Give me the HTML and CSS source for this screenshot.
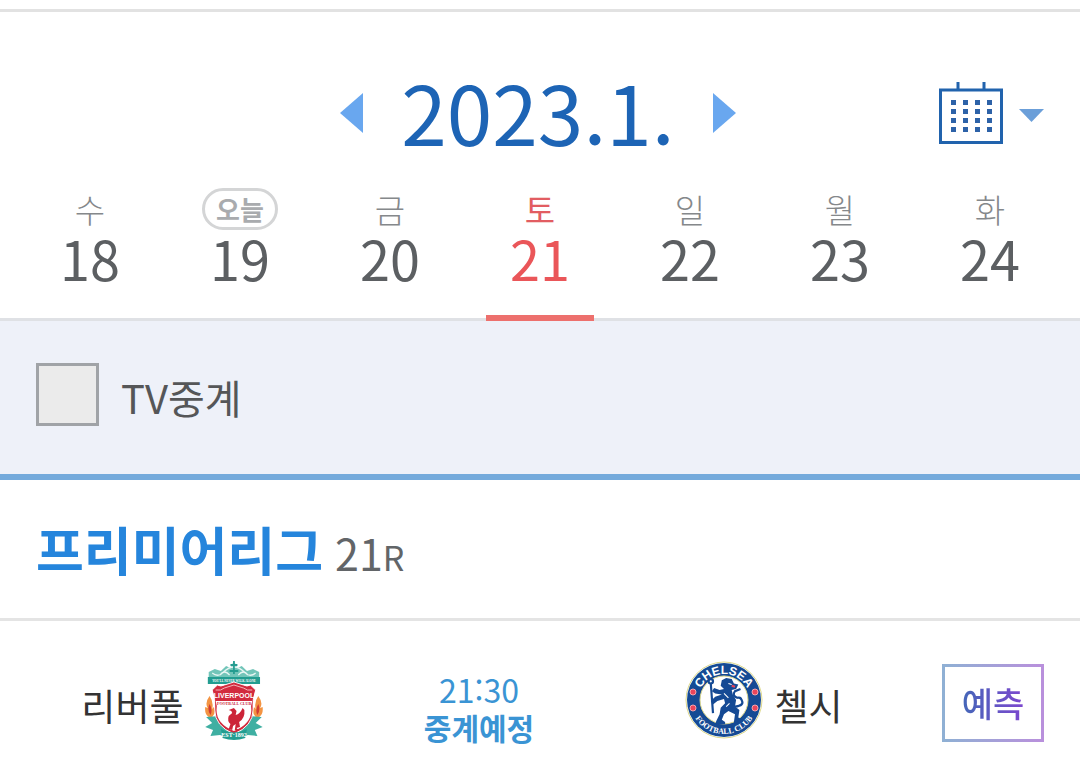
FILE: index.html
```
<!DOCTYPE html>
<html lang="ko">
<head>
  <meta charset="UTF-8">
  <meta name="viewport" content="width=device-width, initial-scale=1.0">
  <title>경기 일정</title>
  <link rel="stylesheet" href="styles.css">
</head>
<body>

  <header class="schedule-header">
    <div class="month-nav">
      <button type="button" class="nav-button" aria-label="이전 달">
        <svg width="23" height="40" viewBox="0 0 23 40"><path d="M23 0v40L0 20z" fill="#69a7ef"/></svg>
      </button>
      <h1 class="current-month">2023.1.</h1>
      <button type="button" class="nav-button" aria-label="다음 달">
        <svg width="23" height="40" viewBox="0 0 23 40"><path d="M0 0v40l23-20z" fill="#69a7ef"/></svg>
      </button>
    </div>
    <button type="button" class="calendar-button" aria-label="달력 열기">
      <svg width="106" height="62" viewBox="0 0 106 62">
        <path d="M2.500 8h61v52.500h-61zM20 0v8M46 0v8" fill="none" stroke="#2163ad" stroke-width="3"/>
        <path d="M13 20.500h42M13 29.500h42M13 38.500h42M13 47.500h42" stroke="#2d62a8" stroke-width="5" stroke-dasharray="5 7"/>
        <path d="M81 27h25L93.500 40z" fill="#6b9fd9"/>
      </svg>
    </button>
  </header>

  <!-- 날짜 선택 -->
  <nav class="days">
    <a href="#" class="day"><span class="day-name">수</span><span class="day-number">18</span></a>
    <a href="#" class="day"><span class="day-name"><span class="today">오늘</span></span><span class="day-number">19</span></a>
    <a href="#" class="day"><span class="day-name">금</span><span class="day-number">20</span></a>
    <a href="#" class="day selected" aria-current="date"><span class="day-name">토</span><span class="day-number">21</span></a>
    <a href="#" class="day"><span class="day-name">일</span><span class="day-number">22</span></a>
    <a href="#" class="day"><span class="day-name">월</span><span class="day-number">23</span></a>
    <a href="#" class="day"><span class="day-name">화</span><span class="day-number">24</span></a>
  </nav>

  <div class="filter">
    <input type="checkbox" id="tv" class="filter-check">
    <label class="filter-label" for="tv">TV중계</label>
  </div>

  <main>
    <h2 class="league">프리미어리그<span class="round"> 21<small>R</small></span></h2>

    <div class="match">
      <div class="team home">
        <span class="team-name">리버풀</span>
        <svg class="crest" viewBox="0 0 78 80" role="img" aria-label="리버풀">
          <g transform="translate(5 0) scale(.87 1)">
            <!-- 상단 장식 -->
            <path d="M10 18v-6l7-3 7 2 6-5 5 2 4-7 4 7 5-2 6 5 7-2 7 3v6z" fill="#72c5b9"/>
            <path d="M14 13q7 5 13-1 6-5 12-5t12 5q6 6 13 1M23 15q5-6 11 0M55 15q-5-6-11 0" fill="none" stroke="#e8f6f3" stroke-width="1.500"/>
            <path d="M39 1v13M35 5h8M34 11h10" stroke="#249c90" stroke-width="2"/>
            <path d="M9 17h60v7H9z" fill="#239d91"/>
            <!-- 불꽃 -->
            <path d="M11 36q-6 7-2 12l-3-1q-1 7 4 10h4q5-5 2-10l-2 2q2-7-3-13zM67 36q6 7 2 12l3-1q1 7-4 10h-4q-5-5-2-10l2 2q-2-7 3-13z" fill="#f39443"/>
            <path d="M11 44q-3 6 1 11 3-5-1-11zM67 44q3 6-1 11-3-5 1-11z" fill="#d33b32"/>
            <path d="M7 57l16-1 4 8 9 7v8l-13-4-11 1 3-6-9-3 8-4zM71 57l-16-1-4 8-9 7v8l13-4 11 1-3-6 9-3-8-4z" fill="#3fafa2"/>
            <!-- 방패 -->
            <path d="M14 30l6-5q4 2 8 0l11-3 11 3q4 2 8 0l6 5q-4 9-3 20 0 16-22 24-22-8-22-24 1-11-3-20z" fill="#d22b3e" stroke="#fff"/>
            <path d="M18 41h42q-2 5-1 9 0 14-20 21-20-7-20-21 1-4-1-9z" fill="#fff"/>
            <path d="M18 30q6 1 10-2l11-3 11 3q4 3 10 2" fill="none" stroke="#f6bcc0"/>
            <path d="M33 50l6-2 3 3-1 4q5-1 8-7l2 2q1 8-6 12l1 5-4 1 3 3-5-1 1-6-3 2-1 4-4-1 2-5q-4-3-2-8l4-3-1-2z" fill="#cc2438"/>
            <path d="M24 69q15 7 30 0l-2 9q-13 4-26 0z" fill="#239d91"/>
          </g>
          <text class="crest-motto" x="39" y="22" text-anchor="middle">YOU'LL NEVER WALK ALONE</text>
          <text class="crest-name" x="39" y="38" text-anchor="middle">LIVERPOOL</text>
          <text class="crest-club" x="39" y="45" text-anchor="middle">FOOTBALL CLUB</text>
          <text class="crest-est" x="39" y="77" text-anchor="middle">EST·1892</text>
        </svg>
      </div>

      <div class="match-time">
        <time class="kickoff" datetime="2023-01-21T21:30">21:30</time>
        <span class="broadcast">중계예정</span>
      </div>

      <div class="team away">
        <svg class="crest" viewBox="0 0 78 80" role="img" aria-label="첼시">
          <circle cx="39" cy="40" r="38" fill="#fff" stroke="#ded98c" stroke-width="1"/>
          <circle cx="39" cy="40" r="37" fill="#154a94"/>
          <circle cx="39" cy="40" r="24" fill="#fff" stroke="#ded98c" stroke-width="1"/>
          <path id="arc-top" d="M13 40a26 26 0 0 1 52 0" fill="none"/>
          <path id="arc-bottom" d="M5 40a34 34 0 0 0 68 0" fill="none"/>
          <text class="ring-name" text-anchor="middle"><textPath href="#arc-top" startOffset="50%">CHELSEA</textPath></text>
          <text class="ring-club" text-anchor="middle"><textPath href="#arc-bottom" startOffset="50%">FOOTBALL CLUB</textPath></text>
          <g fill="#e8455b" stroke="#f4a4ad">
            <circle cx="8" cy="32" r="3"/><circle cx="70" cy="32" r="3"/>
            <circle cx="8" cy="48" r="3"/><circle cx="70" cy="48" r="3"/>
          </g>
          <!-- 사자 -->
          <g transform="translate(-5 -4) scale(1.1)">
            <g fill="#154a94">
              <path d="M38 22l4-2 5 1 2 4 4 1-2 4-4 1 1 4 3 5-1 6 4 3-1 7 4 2v2h-8l1-7-6-3-4 3-2 5 3 2v2h-9l1-3 3-6 1-6 4-4-1-4-6 2-4 3-2-3 4-4 6-2-6-1-3-2 2-3 5 2 4-1-3-3z"/>
              <path d="M50 46q9-1 6-6-1-3-4-2-5-2-2-6l5-2M28 25l2 27" fill="none" stroke="#154a94" stroke-width="2"/>
              <circle cx="28" cy="23" r="2" fill="#fff" stroke="#154a94" stroke-width="2"/>
            </g>
            <path d="M44 25l3 1M40 34l4 4M42 46l3-3" stroke="#fff"/>
            <path d="M47 27l3 1" stroke="#e8455b" stroke-width="2"/>
          </g>
        </svg>
        <span class="team-name">첼시</span>
      </div>

      <button type="button" class="predict-button"><span>예측</span></button>
    </div>
  </main>

</body>
</html>
```

FILE: styles.css
```
* {
  box-sizing: border-box;
}

body {
  margin: 0;
  padding-top: 9px;
  background-color: #ffffff;
  color: #333333;
  font-family: 'Noto Sans CJK KR', sans-serif;
}

button {
  padding: 0;
  border: none;
  background: none;
  font-family: inherit;
  cursor: pointer;
}

svg {
  display: block;
}

/* 월 이동 */
.schedule-header {
  display: grid;
  grid-template-columns: 1fr auto 1fr;
  align-items: center;
  padding: 46px 36px 17px 32px;
  border-top: 3px solid #e2e2e2;
}

.month-nav {
  grid-column: 2;
  display: flex;
  align-items: center;
  gap: 38px;
}

.current-month {
  margin: 0;
  padding-bottom: 4px;
  color: #1d64b5;
  font-size: 82px;
  font-weight: 400;
  line-height: 106px;
}

.calendar-button {
  justify-self: end;
}

/* 날짜 */
.days {
  display: grid;
  grid-template-columns: repeat(7, 1fr);
  padding: 0 15px;
  border-bottom: 3px solid #dfe1e5;
}

.day {
  display: flex;
  flex-direction: column;
  align-items: center;
  padding-bottom: 35px;
  color: #5c5f62;
  text-decoration: none;
}

.day-name {
  display: flex;
  align-items: center;
  height: 48px;
  color: #85888b;
  font-size: 33px;
  font-weight: 300;
  line-height: 48px;
}

.day-number {
  font-size: 54px;
  line-height: 50px;
}

.today {
  padding: 0 11px;
  border: 3px solid #d4d5d6;
  border-radius: 21px;
  color: #a9abae;
  font-size: 26px;
  font-weight: 700;
  line-height: 36px;
}

.day.selected {
  position: relative;
  color: #ea5659;
}

.day.selected .day-name {
  color: #e25d62;
  font-weight: 400;
}

.day.selected::after {
  content: '';
  position: absolute;
  bottom: -3px;
  width: 72%;
  height: 6px;
  background-color: #ed706d;
}

/* 중계 필터 */
.filter {
  display: flex;
  align-items: center;
  gap: 22px;
  padding: 42px 36px 48px;
  background-color: #eef1f9;
  border-bottom: 6px solid #74aadc;
}

.filter-label {
  padding-top: 5px;
  color: #555658;
  font-size: 40px;
  line-height: 58px;
}

.filter-check {
  appearance: none;
  width: 63px;
  height: 63px;
  margin: 0;
  border: 3px solid #a0a3a7;
  background-color: #ebebeb;
}

.filter-check:checked {
  background-color: #74aadc;
}

/* 리그 */
.league {
  margin: 0;
  padding: 32px 36px;
  border-bottom: 3px solid #e4e4e4;
  color: #2585dc;
  font-size: 52px;
  font-weight: 700;
  line-height: 74px;
}

.round {
  color: #626568;
  font-size: 43px;
  font-weight: 400;
  line-height: 1;
}

.round small {
  font-size: 34px;
}

/* 경기 */
.match {
  display: grid;
  grid-template-columns: 119fr 206fr 129fr auto;
  align-items: start;
  padding: 39px 36px;
}

.team {
  display: flex;
  gap: 12px;
  color: #333333;
  font-size: 37px;
}

.team-name {
  padding-top: 10px;
  line-height: 70px;
}

.home {
  justify-content: flex-end;
}

.crest {
  flex: none;
  width: 78px;
  height: 80px;
}

.crest text {
  font-family: 'Liberation Serif', serif;
  font-weight: 700;
  fill: #ffffff;
}

.crest .crest-motto {
  font-size: 3px;
}

.crest .crest-name {
  font-family: 'Liberation Sans', sans-serif;
  font-size: 7px;
}

.crest .crest-club {
  font-size: 4px;
  fill: #cc2438;
}

.crest .crest-est {
  font-size: 6px;
}

.crest .ring-name {
  font-family: 'Liberation Sans', sans-serif;
  font-size: 12px;
}

.crest .ring-club {
  font-size: 8px;
}

.match-time {
  display: flex;
  flex-direction: column;
  align-items: center;
  padding-top: 10px;
  color: #3a94d4;
}

.kickoff {
  font-size: 32px;
  line-height: 38px;
}

.broadcast {
  font-size: 30px;
  font-weight: 700;
  line-height: 38px;
}

.predict-button {
  align-self: center;
  width: 102px;
  height: 78px;
  border: 3px solid;
  border-image: linear-gradient(90deg, #8fb0d4, #b990dc) 1;
  font-size: 34px;
  font-weight: 500;
  line-height: 72px;
}

.predict-button span {
  background: linear-gradient(90deg, #4467b8, #7d47cf);
  background-clip: text;
  color: transparent;
}
```
